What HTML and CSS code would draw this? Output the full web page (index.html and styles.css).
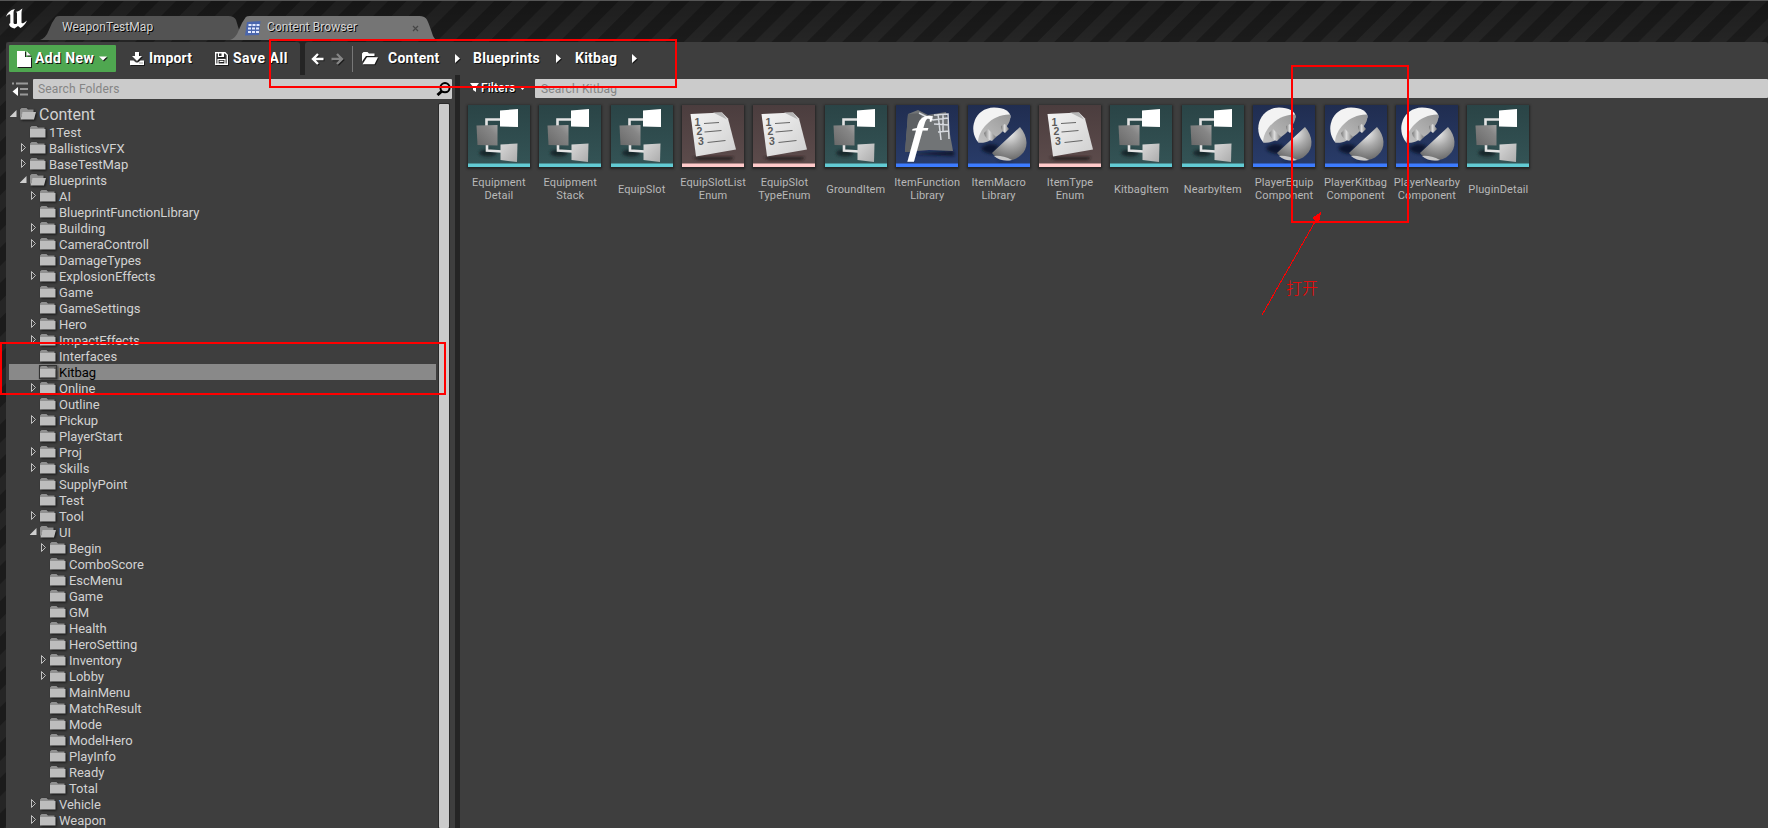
FILE: index.html
```html
<!DOCTYPE html>
<html lang="en">
<head>
<meta charset="utf-8">
<title>Content Browser</title>
<link rel="stylesheet" href="styles.css">
</head>
<body>
<svg class="defs" width="0" height="0">
  <defs>
    <linearGradient id="gTeal" x1="0" y1="0" x2="0" y2="1"><stop offset="0" stop-color="#2a4446"/><stop offset="1" stop-color="#345456"/></linearGradient>
    <linearGradient id="gRose" x1="0" y1="0" x2="0" y2="1"><stop offset="0" stop-color="#4b3d3e"/><stop offset="1" stop-color="#5d4c4c"/></linearGradient>
    <linearGradient id="gBlue" x1="0" y1="0" x2="0" y2="1"><stop offset="0" stop-color="#202d50"/><stop offset="1" stop-color="#293c6a"/></linearGradient>
    <linearGradient id="gGray" x1="0" y1="1" x2="1" y2="0"><stop offset="0" stop-color="#686868"/><stop offset=".7" stop-color="#868686"/><stop offset="1" stop-color="#a2a2a2"/></linearGradient>
    <linearGradient id="gLight" x1="0" y1="0" x2="1" y2="1"><stop offset="0" stop-color="#d8d8d8"/><stop offset="1" stop-color="#acacac"/></linearGradient>
    <linearGradient id="gPaper" x1="0" y1="0" x2="1" y2="1"><stop offset="0" stop-color="#f4f4f4"/><stop offset="1" stop-color="#cfcfcf"/></linearGradient>
    <linearGradient id="gFace" x1="0" y1="1" x2="1" y2="0"><stop offset="0" stop-color="#c4c4c4"/><stop offset="1" stop-color="#989898"/></linearGradient>
    <radialGradient id="gBall" cx=".5" cy=".2" r=".75"><stop offset="0" stop-color="#efefef"/><stop offset=".5" stop-color="#a9a9a9"/><stop offset="1" stop-color="#707070"/></radialGradient>
    <linearGradient id="gPeg" x1="0" y1="0" x2="1" y2="0"><stop offset="0" stop-color="#777"/><stop offset=".45" stop-color="#ddd"/><stop offset="1" stop-color="#777"/></linearGradient>
    <filter id="soft" x="-30%" y="-60%" width="160%" height="220%"><feGaussianBlur stdDeviation="1.6"/></filter>
    <symbol id="closed" viewBox="0 0 18 14"><path d="M1 12V2.5L2.5 1h5L9 2.5h6.5V12z" fill="#909090"/><path d="M1 4h15.500v8.500H1z" fill="#bdbdbd"/></symbol>
    <symbol id="open" viewBox="0 0 18 14"><path d="M1 12V2.500L2.500 1h5L9 2.500h5.500V6H4z" fill="#909090"/><path d="M3.500 5h13.500l-2 7.500H1.500z" fill="#bdbdbd"/></symbol>
    <symbol id="widget" viewBox="0 0 62 62">
      <path fill="url(#gTeal)" d="M0 0h62v62H0z"/>
      <ellipse cx="20" cy="48" rx="9" ry="3.500" fill="#162829" filter="url(#soft)"/>
      <path d="M18.500 22v-7.500H34M19 40v5.500l15 1" fill="none" stroke="#e4e4e4" stroke-width="2.600"/>
      <path d="M32 5.500 50 4v18l-18-.5z" fill="#fff"/><path d="M8.500 20.500 29.500 20v20.500l-20-.5z" fill="url(#gGray)"/><path d="M32.500 39.500 49.500 38.500 49 57l-16.500-2z" fill="url(#gLight)"/>
      <path fill="#62cbd4" d="M0 58.500h62V62H0z"/>
    </symbol>
    <symbol id="enum" viewBox="0 0 62 62">
      <path fill="url(#gRose)" d="M0 0h62v62H0z"/>
      <path d="M10 52h42l-3 3H16z" fill="#241a1a" filter="url(#soft)"/>
      <path d="M8.500 9 40 7.500l6 6L54 44.500 14 51.500z" fill="url(#gPaper)"/><path d="M31 7.500h9l5 7z" fill="#b5b5b5"/>
      <path d="m22 18.500 15-1M22.500 27l17-1.500M25.500 37.500l18-2" stroke="#666" stroke-width="1.200"/>
      <g font-family="Liberation Sans" font-weight="700" font-size="10.500" fill="#5c5c5c"><text x="12.500" y="20.500">1</text><text x="14.500" y="29.500">2</text><text x="16" y="39.500">3</text></g>
      <path fill="#ffcaca" d="M0 58.500h62V62H0z"/>
    </symbol>
    <symbol id="func" viewBox="0 0 62 62">
      <path fill="url(#gBlue)" d="M0 0h62v62H0z"/>
      <path d="m12 49 46 2v-5z" fill="#10182e" filter="url(#soft)"/>
      <path d="m12 9 10-4 10 5 18-3 7 39-24-1-24 2z" fill="#717476"/><path d="M12 9 9 47h9l8-39z" fill="#5d6063"/>
      <path d="m23 8 8 4 6 3 15-2M38 10l14-1 1 25M42 9l3 26M38 19l15 1M42 27l11-1M47 9v18" fill="none" stroke="#d7dadf" stroke-width="1.500"/>
      <text x="0" y="0" transform="translate(12.500 45.500) skewX(-6)" font-family="Liberation Serif" font-style="italic" font-weight="700" font-size="50" fill="#fff">f</text>
      <path fill="#3d7cff" d="M0 58.500h62V62H0z"/>
    </symbol>
    <symbol id="macro" viewBox="0 0 62 62">
      <path fill="url(#gBlue)" d="M0 0h62v62H0z"/>
      <path d="M13 44c3-6 12-6 18-3l-5 8q-9 0-13-5zM26 53q9 6 20 3l-14 1z" fill="#0f1832" filter="url(#soft)"/>
      <path d="M10 37C0 25 6 3 26 2.500c10 0 17 4 16.500 10z" fill="#f3f3f3"/>
      <path d="M10 37.500C10 25 24 9 42 9.500c2 5-3 13-10 19.500-7 6-16 10-22 8.500z" fill="url(#gFace)"/>
      <path d="m16 28 4-4 8 8-4 4q-7-2-8-8z" fill="url(#gPeg)"/><path d="m33 21 4-2 4 5-4 4q-4-2-4-7z" fill="url(#gPeg)"/>
      <path d="M24 48 52 22c8 9 9 21 1 28-8 8-22 7-29-2z" fill="url(#gBall)"/>
      <path d="M26 51q8-1 18 4-11 2-18-4z" fill="#c9c9c9"/>
      <path fill="#3d7cff" d="M0 58.500h62V62H0z"/>
    </symbol>
  </defs>
</svg>
<div class="window">
  <header class="titlebar">
    <svg class="logo" viewBox="0 0 24 22"><path d="M1 9C2 5 5 2 10 1 9 2 8.500 3 8.500 5v9.500c0 1.500 1.500 2 3.500 1V5.500c0-1-.5-1.500-1.500-1.500C13 3.500 15.500 2 17.500.5 17 2 16.500 3 16.500 5v9.500c0 1.200 1.500 1.500 5.500-2C20.500 16 18 18.500 15.500 20l-2.500-2-3.500 2.500C6 20 4 18 4 15.500c1 .5 1.300 0 1.300-1V7C5.300 5.500 3 6 1 9z" fill="#fff"/></svg>
    <div class="tab tab-back">
      <svg class="tabshape" viewBox="0 0 204 24" preserveAspectRatio="none"><path d="M0 24Q6 22 9 14T16 1Q17 0 20 0H190Q196 0 198 4L204 24z" fill="#535353"/></svg>
      <span class="tabtext">WeaponTestMap</span>
    </div>
    <div class="tab tab-front">
      <svg class="tabshape" viewBox="0 0 208 24" preserveAspectRatio="none"><path d="M0 24Q6 22 9 14T16 1Q17 0 20 0H191Q197 0 199 4T205 20Q206 22 208 24z" fill="#757575"/></svg>
      <svg class="gridicon" viewBox="0 0 16 15"><path d="M2 1 15.500 0 14 14 0 14.500z" fill="#4a66ad"/><path d="M3.500 3h3v2h-3zM7.500 3h3v2h-3zM11.500 3h3v2h-3zM3 6.500h3v2H3zM7 6.500h3v2H7zM11 6.500h3v2h-3zM3 10h3v2H3zM7 10h3v2H7zM11 10h3v2h-3z" fill="#e3eaff"/></svg>
      <span class="tabtext">Content Browser</span>
      <svg class="close" viewBox="0 0 7 7"><path d="m1 1 5 5M6 1 1 6" stroke="#464646" stroke-width="1.200"/></svg>
    </div>
  </header>
  <div class="toolbar">
    <div class="tools">
      <div class="btn add"><svg class="i-file" viewBox="0 0 14 16"><path d="M0 0h8v6h6v10H0zM9.500 0 14 4.500H9.500z" fill="#fff"/></svg><span>Add New</span><svg class="i-caret" viewBox="0 0 8 5"><path d="M0 .5h8L4 4.500z" fill="#fff"/></svg></div>
      <div class="btn import"><svg class="i-import" viewBox="0 0 14 13"><path d="M5 0h4v4h3L7 9 2 4h3zM0 8.500h3.500L6 10.500h2l2.500-2H14V13H0z" fill="#fff"/><path d="M9.500 11h1M11.500 11h1" stroke="#3e3e3e"/></svg><span>Import</span></div>
      <div class="btn save"><svg class="i-save" viewBox="0 0 13 13"><path d="M.7.700h9.300L12.300 3v9.300H.7z" fill="none" stroke="#fff" stroke-width="1.400"/><path d="M3.500 1v3.500h5V1M3 12V7.500h7V12M4.500 9.300h4" fill="none" stroke="#fff" stroke-width="1.200"/><path d="M6.500 1h2v3h-2z" fill="#fff"/></svg><span>Save All</span></div>
    </div>
    <nav class="crumbs">
      <svg class="arrow" viewBox="0 0 13 12"><path d="M12.500 6H2M7 1 2 6l5 5" fill="none" stroke="#fff" stroke-width="2.400"/></svg>
      <svg class="arrow fwd" viewBox="0 0 13 12"><path d="M.5 6H11M6 1l5 5-5 5" fill="none" stroke="#858585" stroke-width="2.400"/></svg>
      <i class="sep"></i>
      <svg class="i-open" viewBox="0 0 16 13"><path d="M0 9.500V1.500L1.500 0h4L7 1.500h5.500V4H4zM5 5.200h11l-3.500 7H.5z" fill="#fff"/></svg>
      <span class="c1">Content</span><svg class="tri" viewBox="0 0 5 9"><path d="m0 0 5 4.500L0 9z" fill="#fff"/></svg>
      <span class="c2">Blueprints</span><svg class="tri" viewBox="0 0 5 9"><path d="m0 0 5 4.500L0 9z" fill="#fff"/></svg>
      <span class="c3">Kitbag</span><svg class="tri" viewBox="0 0 5 9"><path d="m0 0 5 4.500L0 9z" fill="#fff"/></svg>
    </nav>
  </div>
  <main class="panes">
    <aside class="sources">
      <div class="searchrow">
        <svg class="i-tree" viewBox="0 0 16 14"><path d="M0 .5h2v2H0zM4 .5h12v2H4zM8 6h8v2H8zM8 11.500h8v2H8z" fill="#999"/><path d="M6 5v9L.5 9.500z" fill="#fff"/></svg>
        <div class="search folders"><span>Search Folders</span><svg class="i-mag" viewBox="0 0 15 14"><circle cx="9" cy="5.700" r="4.600" fill="none" stroke="#000" stroke-width="2"/><path d="M6 9 1.500 13" stroke="#000" stroke-width="3"/></svg></div>
      </div>
      <div class="treewrap">
        <div class="tree" id="tree"></div>
        <div class="scroll"></div>
      </div>
    </aside>
    <section class="assets">
      <div class="filterrow">
        <div class="filters"><svg class="i-fun" viewBox="0 0 9 9"><path d="M0 0h9L6 4v5L3 7V4z" fill="#fff"/></svg><span>Filters</span><svg class="i-caret2" viewBox="0 0 7 4"><path d="M0 0h7L3.500 4z" fill="#fff"/></svg></div>
        <div class="search kit"><span>Search Kitbag</span></div>
      </div>
      <div class="tiles" id="tiles"></div>
    </section>
  </main>
  <div class="mark mark-path"></div>
  <div class="mark mark-tree"></div>
  <div class="mark mark-asset"></div>
  <svg class="pointer" viewBox="0 0 64 106" shape-rendering="crispEdges"><path d="M2 103 56 8" stroke="#f00"/><path d="M61 0 52 6l7 5z" fill="#f00"/></svg>
  <div class="note">打开</div>
</div>
<script src="app.js"></script>
</body>
</html>
```
FILE: styles.css
```css
* { box-sizing: border-box; }
body { margin: 0; background: #202020; font-family: Roboto, "Noto Sans", sans-serif; overflow: hidden; }
.defs { position: absolute; }
svg { display: block; flex: none; }
.window {
  position: relative; width: 1768px; height: 828px; overflow: hidden; display: flex; flex-direction: column;
  padding-left: 6px; border-top: 1px solid #565656;
  background: linear-gradient(#0003, #0000 40px), repeating-linear-gradient(135deg, #1b1b1b 0 12px, #252525 13px 24px, #1b1b1b 25px);
}
.titlebar { display: flex; height: 41px; flex: none; align-items: flex-start; }
.logo { width: 24px; height: 22px; margin: 7px 0 0 -1px; }
.tab { position: relative; height: 24px; margin-top: 15px; display: flex; align-items: center; font-size: 12px; color: #d5d5d5; text-shadow: 1px 1px 0 #000; }
.tabshape { position: absolute; left: 0; top: 0; width: 100%; height: 24px; }
.tab-back { width: 202px; margin-left: 11px; padding-left: 22px; }
.tab-front { width: 206px; margin-left: -12px; padding-left: 15px; }
.tabtext { position: relative; top: -1px; letter-spacing: .07px; }
.gridicon { position: relative; width: 16px; height: 15px; margin-right: 6px; }
.close { position: relative; width: 7px; height: 7px; margin-left: 55px; }
.toolbar { display: flex; gap: 5px; height: 33px; flex: none; background: #242424; font-size: 14px; font-weight: 700; color: #fff; text-shadow: 1px 1px 0 #111; }
.toolbar span { position: relative; top: -1px; }
.tools, .crumbs { display: flex; align-items: center; background: #3e3e3e; border-radius: 3px 3px 0 0; }
.tools { width: 294px; padding-left: 3px; }
.crumbs { flex: 1; padding-left: 6px; }
.btn { display: flex; align-items: center; height: 27px; letter-spacing: .15px; }
.toolbar svg { filter: drop-shadow(1px 1px 0 #1a1a1a); }
.add { width: 107px; padding-left: 8px; background: #4fa750; border-radius: 1px; letter-spacing: .4px; }
.i-file { width: 14px; height: 16px; margin-right: 4px; }
.i-caret { width: 8px; height: 5px; margin-left: 5px; }
.import { width: 85px; padding-left: 14px; }
.i-import { width: 14px; height: 13px; margin-right: 5px; }
.save { padding-left: 14px; letter-spacing: .5px; }
.i-save { width: 13px; height: 13px; margin-right: 5px; }
.arrow { width: 13px; height: 12px; }
.fwd { margin-left: 7px; }
.sep { width: 1px; height: 26px; margin: 0 9px 0 8px; background: #777; }
.i-open { width: 16px; height: 13px; }
.tri { width: 5px; height: 9px; }
.c1, .c2, .c3 { letter-spacing: .25px; }
.c1 { width: 67px; margin-left: 10px; } .c2 { width: 83px; margin-left: 13px; } .c3 { width: 57px; margin-left: 14px; }
.panes { display: flex; flex: 1; min-height: 0; gap: 5px; background: #242424; }
.sources { width: 449px; background: #3e3e3e; display: flex; flex-direction: column; }
.searchrow { display: flex; height: 24px; padding: 4px 3px 0 6px; }
.i-tree { width: 16px; height: 14px; margin: 3px 5px 0 0; }
.search { display: flex; align-items: center; background: #cbcbcb; color: #858585; font-size: 12px; border-radius: 1px; }
.folders { flex: 1; height: 20px; padding: 0 1px 0 5px; justify-content: space-between; letter-spacing: .15px; }
.i-mag { width: 15px; height: 14px; }
.treewrap { display: flex; flex: 1; min-height: 0; padding: 5px 6px 0 3px; justify-content: space-between; overflow: hidden; }
.tree { width: 427px; }
.row { display: flex; align-items: center; height: 16px; font-size: 13px; color: #d2d2d2; letter-spacing: -.03px; }
.row.root { height: 20px; font-size: 16px; }
.row.sel { background: #898989; color: #000; }
.row.sel .folder { outline: 1px solid #333; outline-offset: -1px; }
.twist { width: 7px; height: 9px; margin: -2px 2px 0 1px; }
.folder { width: 18px; height: 14px; margin-right: 2px; filter: drop-shadow(1px 1px 1px #111); }
.scroll { width: 10px; background: #cbcbcb; border-radius: 1px; box-shadow: 0 0 0 1px #2a2a2a; }
.assets { flex: 1; background: #3e3e3e; display: flex; flex-direction: column; }
.filterrow { display: flex; height: 23px; padding-top: 4px; }
.filters { display: flex; width: 75px; padding-left: 10px; height: 17px; align-items: center; font-size: 12px; font-weight: 500; color: #fff; text-shadow: 1px 1px 0 #000; letter-spacing: .1px; }
.i-fun { width: 9px; height: 9px; margin-right: 2px; }
.i-caret2 { width: 7px; height: 4px; margin-left: 4px; }
.kit { flex: 1; height: 19px; padding-left: 6px; letter-spacing: .15px; }
.tiles { display: grid; grid-template-columns: repeat(15, 71.400px); padding: 7px 0 0 3.200px; }
.tile { display: flex; flex-direction: column; align-items: center; width: 71.400px; }
.thumb { width: 62px; height: 62px; box-shadow: 0 1px 2px 1px #242424; }
.label { height: 26px; margin-top: 9px; display: flex; align-items: center; text-align: center; white-space: pre; font-size: 11px; line-height: 13px; color: #b8b8b8; letter-spacing: .12px; }
.mark { position: absolute; border: 2px solid #f00; }
.mark-path { left: 269px; top: 38px; width: 408px; height: 49px; }
.mark-tree { left: 0; top: 341px; width: 446px; height: 53px; }
.mark-asset { left: 1291px; top: 64px; width: 118px; height: 158px; }
.pointer { position: absolute; left: 1260px; top: 211px; width: 64px; height: 106px; }
.note { position: absolute; left: 1286px; top: 274px; font: 300 16px/24px "Noto Sans CJK SC", sans-serif; color: #f00; }
```
FILE: app.js
```javascript
// [depth, name, state] - state: '' leaf, '+' collapsed, '-' expanded
const folders = [
  [0, 'Content', '-'], [1, '1Test', ''], [1, 'BallisticsVFX', '+'], [1, 'BaseTestMap', '+'], [1, 'Blueprints', '-'],
  [2, 'AI', '+'], [2, 'BlueprintFunctionLibrary', ''], [2, 'Building', '+'], [2, 'CameraControll', '+'],
  [2, 'DamageTypes', ''], [2, 'ExplosionEffects', '+'], [2, 'Game', ''], [2, 'GameSettings', ''], [2, 'Hero', '+'],
  [2, 'ImpactEffects', '+'], [2, 'Interfaces', ''], [2, 'Kitbag', ''], [2, 'Online', '+'], [2, 'Outline', ''],
  [2, 'Pickup', '+'], [2, 'PlayerStart', ''], [2, 'Proj', '+'], [2, 'Skills', '+'], [2, 'SupplyPoint', ''],
  [2, 'Test', ''], [2, 'Tool', '+'], [2, 'UI', '-'], [3, 'Begin', '+'], [3, 'ComboScore', ''], [3, 'EscMenu', ''],
  [3, 'Game', ''], [3, 'GM', ''], [3, 'Health', ''], [3, 'HeroSetting', ''], [3, 'Inventory', '+'], [3, 'Lobby', '+'],
  [3, 'MainMenu', ''], [3, 'MatchResult', ''], [3, 'Mode', ''], [3, 'ModelHero', ''], [3, 'PlayInfo', ''],
  [3, 'Ready', ''], [3, 'Total', ''], [2, 'Vehicle', '+'], [2, 'Weapon', '+']
];
const twist = {
  '': '',
  '+': '<path d="M1.500.5v8L5.500 4.500z" fill="none" stroke="#c0c0c0"/>',
  '-': '<path d="M6.500 1v7H-.5z" fill="#cfcfcf"/>'
};
document.getElementById('tree').innerHTML = folders.map(([depth, name, state]) =>
  `<div class="row${depth ? '' : ' root'}${name === 'Kitbag' ? ' sel' : ''}" style="padding-left:${depth * 10}px">` +
  `<svg class="twist" viewBox="0 0 7 9">${twist[state]}</svg>` +
  `<svg class="folder"><use href="#${state === '-' ? 'open' : 'closed'}"/></svg><span>${name}</span></div>`).join('');

const assets = [
  ['widget', 'Equipment\nDetail'], ['widget', 'Equipment\nStack'], ['widget', 'EquipSlot'], ['enum', 'EquipSlotList\nEnum'],
  ['enum', 'EquipSlot\nTypeEnum'], ['widget', 'GroundItem'], ['func', 'ItemFunction\nLibrary'], ['macro', 'ItemMacro\nLibrary'],
  ['enum', 'ItemType\nEnum'], ['widget', 'KitbagItem'], ['widget', 'NearbyItem'], ['macro', 'PlayerEquip\nComponent'],
  ['macro', 'PlayerKitbag\nComponent'], ['macro', 'PlayerNearby\nComponent'], ['widget', 'PluginDetail']
];
document.getElementById('tiles').innerHTML = assets.map(([kind, label]) =>
  `<div class="tile"><svg class="thumb"><use href="#${kind}"/></svg><div class="label">${label}</div></div>`).join('');
```
